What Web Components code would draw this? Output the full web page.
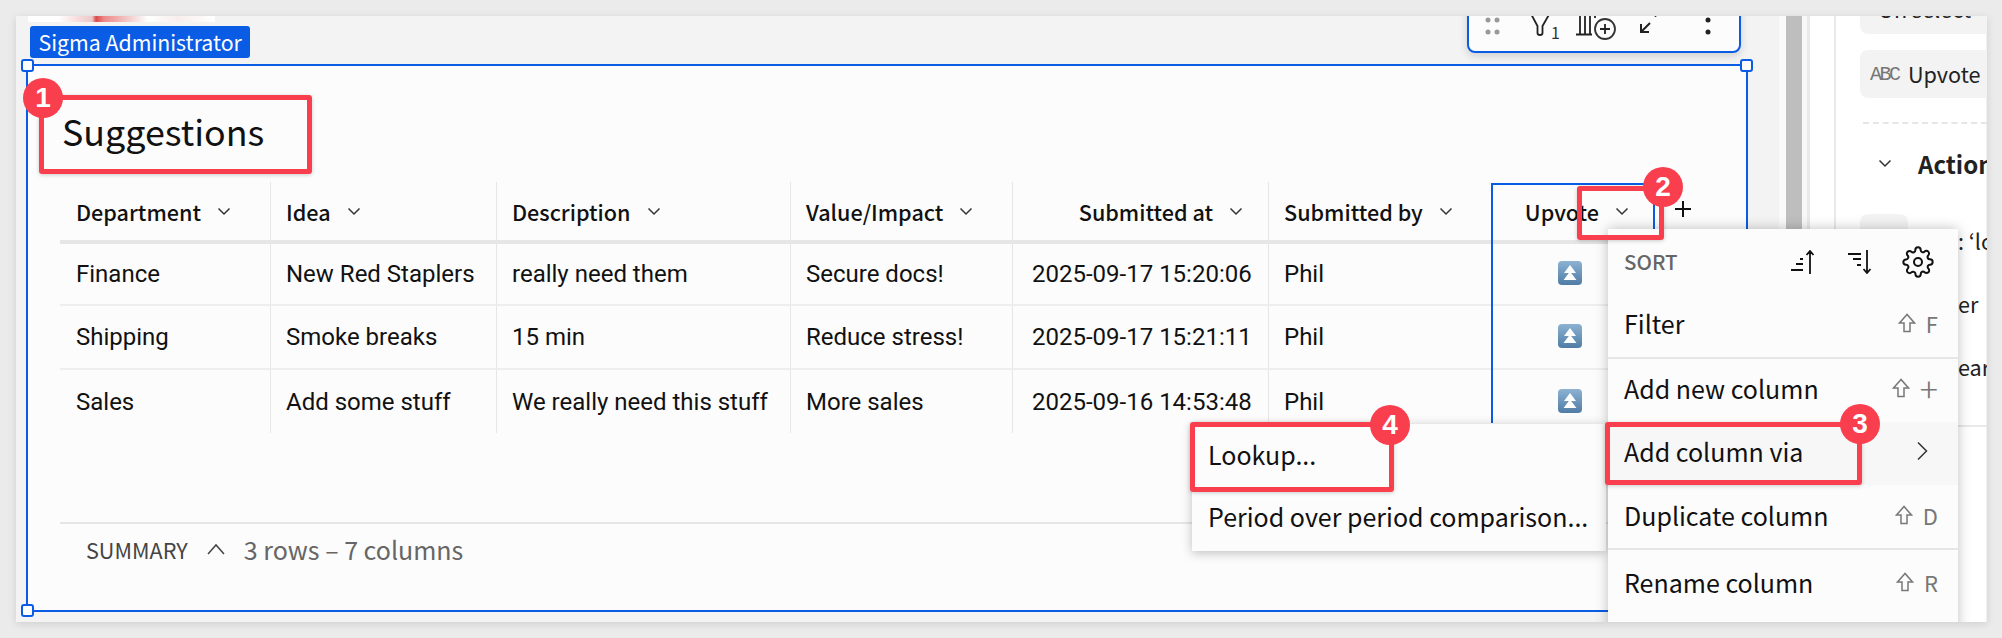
<!DOCTYPE html>
<html>
<head>
<meta charset="utf-8">
<style>
  html, body { margin: 0; padding: 0; background: #ebebeb; }
  body { width: 2002px; height: 638px; overflow: hidden; font-family: "Noto Sans CJK JP", "Noto Sans", sans-serif; color: #111; }
</style>
</head>
<body>
<app-shell>
  <work-canvas>
    <table-element title="Suggestions"></table-element>
  </work-canvas>
  <scroll-gutter></scroll-gutter>
  <side-panel></side-panel>

  <element-toolbar></element-toolbar>

  <sub-menu style="left:1176px;top:408px;width:414px;">
    <menu-item plain>Lookup...</menu-item>
    <menu-item plain>Period over period comparison...</menu-item>
  </sub-menu>

  <column-menu style="left:1592px;top:213px;width:350px;">
    <menu-item key="F" line>Filter</menu-item>
    <menu-item key="+">Add new column</menu-item>
    <menu-item arrow hover>Add column via</menu-item>
    <menu-item key="D" line style="padding-bottom:3px">Duplicate column</menu-item>
    <menu-item key="R" style="padding-bottom:0">Rename column</menu-item>
  </column-menu>

  <call-out n="1" corner="left" off="21,22" box="23,79,273,79"></call-out>
  <call-out n="2" corner="right" off="24,24" box="1561,170,87,54"></call-out>
  <call-out n="3" corner="right" off="23,23" box="1589,406,257,63"></call-out>
  <call-out n="4" corner="right" off="21,22" box="1174,406,204,70"></call-out>
</app-shell>

<script>
const CJK = `"Noto Sans CJK JP", "Noto Sans", sans-serif`;
const chevron = `<svg width="14" height="14" viewBox="0 0 14 14" fill="none" stroke="#333" stroke-width="1.5"><path d="M1.5 4.5 7 10l5.5-5.5"/></svg>`;
const shift = `<svg width="18" height="20" viewBox="0 0 18 20" fill="none" stroke="#777" stroke-width="1.5"><path d="M9 1.5 1.5 10H6v8.5h6V10h4.500z"/></svg>`;
const upvote = `<svg width="24" height="24" viewBox="0 0 24 24">
  <defs><linearGradient id="u" x1="0" y1="0" x2="0" y2="1"><stop offset="0" stop-color="#8db2d2"/><stop offset="1" stop-color="#4f7ca5"/></linearGradient></defs>
  <rect x="0" y="0" width="24" height="24" rx="4" fill="url(#u)"/>
  <path d="M12 4 18 12H6zM12 10.500 18.500 19h-13z" fill="#fff"/></svg>`;

// outer frame, everything else sits in here
class AppShell extends HTMLElement {
  constructor() {
    super();
    this.attachShadow({ mode: "open" }).innerHTML = `
    <style>
      :host { display: flex; position: relative; margin: 16px 0 0 16px; width: 1971px; height: 606px; overflow: hidden; background: #f3f3f3; box-shadow: 0 2px 8px rgba(0,0,0,.12); }
    </style>
    <slot></slot>`;
  }
}

class WorkCanvas extends HTMLElement {
  constructor() {
    super();
    this.attachShadow({ mode: "open" }).innerHTML = `
    <style>
      :host { display: flex; flex-direction: column; flex: 0 0 1763px; height: 606px; }
      .pic { margin-left: 12px; width: 187px; height: 6px; flex: none;
        background: linear-gradient(90deg, #fff 0, #fff 30px, #f6dcdc 50px, #eec9c9 64px, #d84a4a 68px, #e88 76px, #f6e4e4 110px, #fff 120px, #f8eded 150px, #fff 187px); }
      .who { margin: 4px 0 6px 14px; align-self: flex-start; height: 32px; line-height: 31px; padding: 0 8.5px; border-radius: 3px; background: #0a5ce4; color: #fff; font-size: 21.3px; }
    </style>
    <div class="pic"></div>
    <div class="who">Sigma Administrator</div>
    <slot></slot>`;
  }
}

class TableElement extends HTMLElement {
  constructor() {
    super();
    this.attachShadow({ mode: "open" }).innerHTML = `
    <style>
      :host { display: flex; flex-direction: column; position: relative; box-sizing: border-box; margin-left: 10px; width: 1722px; height: 548px; border: 2px solid #0a5ce4; background: #fcfcfc; }
      h1 { margin: 0; box-sizing: border-box; height: 116px; padding: 11px 0 0 34px; display: flex; align-items: center; font-weight: 400; font-size: 35.800px; color: #111; }
      .sp { flex: 1; }
      .sum { margin-left: 32px; height: 88px; box-sizing: border-box; padding: 0 0 36px 26px; border-top: 2px solid #e6e6e6; display: flex; align-items: center; color: #555; }
      .sum b { font-weight: 400; font-size: 21.6px; color: #444; }
      .sum svg { margin: 0 19px 0 19px; }
      .sum span { font-size: 25px; color: #666; }
      .h { position: absolute; width: 9px; height: 9px; border: 2px solid #0a5ce4; border-radius: 3px; background: #fff; }
    </style>
    <h1></h1>
    <data-table></data-table>
    <div class="sp"></div>
    <div class="sum"><b>SUMMARY</b><svg width="18" height="12" viewBox="0 0 18 12" fill="none" stroke="#444" stroke-width="1.5"><path d="M1 11 9 2l8 9"/></svg><span>3 rows – 7 columns</span></div>
    <i class="h" style="left:-7px;top:-7px"></i>
    <i class="h" style="right:-7px;top:-7px"></i>
    <i class="h" style="left:-7px;bottom:-7px"></i>`;
    this.shadowRoot.querySelector("h1").textContent = this.getAttribute("title");
  }
}

const COLS = [
  ["Department", 0], ["Idea", 0], ["Description", 0], ["Value/Impact", 0],
  ["Submitted at", 1], ["Submitted by", 0], ["Upvote", 2],
];
const ROWS = [
  ["Finance", "New Red Staplers", "really need them", "Secure docs!", "2025-09-17 15:20:06", "Phil"],
  ["Shipping", "Smoke breaks", "15 min", "Reduce stress!", "2025-09-17 15:21:11", "Phil"],
  ["Sales", "Add some stuff", "We really need this stuff", "More sales", "2025-09-16 14:53:48", "Phil"],
];

class DataTable extends HTMLElement {
  constructor() {
    super();
    let cells = "";
    COLS.forEach((c, i) => {
      const cls = c[1] == 1 ? "right" : c[1] == 2 ? "up" : "";
      cells += `<div class="c hd ${cls} ${i == 0 ? "first" : ""}"><span>${c[0]}</span>${chevron}</div>`;
    });
    cells += `<div class="plus hd"><svg width="16" height="16" viewBox="0 0 16 16" stroke="#111" stroke-width="2"><path d="M8 0v16M0 8h16"/></svg></div>`;
    ROWS.forEach((r, ri) => {
      r.forEach((t, i) => {
        cells += `<div class="c d ${i == 0 ? "first" : ""} ${i == 4 ? "date" : ""} ${ri == 2 ? "last" : ""}">${t}</div>`;
      });
      cells += `<div class="c d icon ${ri == 2 ? "last" : ""}">${upvote}</div><div class="c d nb ${ri == 2 ? "last" : ""}"></div>`;
    });
    this.attachShadow({ mode: "open" }).innerHTML = `
    <style>
      :host { display: block; position: relative; margin-left: 32px; width: 1640px; }
      .g { display: grid; grid-template-columns: 210px 226px 294px 222px 256px 224px 162px 46px; grid-template-rows: 62px 62px 64px 63px; }
      .c { box-sizing: border-box; display: flex; align-items: center; padding-left: 15px; border-left: 1px solid #e6e6e6; white-space: nowrap; }
      .first { border-left: 0; padding-left: 16px; }
      .date { padding-left: 19px; }
      .hd { border-bottom: 4px solid #e6e6e6; font-weight: 500; font-size: 21.6px; color: #111; }
      .hd svg { margin-left: 16px; }
      .right { justify-content: flex-end; padding-right: 25px; }
      .up { justify-content: flex-end; border-left: 0; padding-right: 25px; }
      .plus { display: flex; align-items: center; padding-left: 7px; }
      .plus svg { margin: 0 0 4px 14px; }
      .d { border-bottom: 2px solid #eee; font-family: Roboto, sans-serif; font-size: 24px; color: #111; }
      .last { border-bottom: 0; }
      .icon { justify-content: center; border-left: 0; padding: 0 6px 2px 0; }
      .nb { border-left: 0; padding: 0; }
      .sel { position: absolute; left: 1431px; top: 1px; width: 164px; height: 240px; box-sizing: border-box; border: 2px solid #0a5ce4; border-bottom: 0; pointer-events: none; }
    </style>
    <div class="g">${cells}</div>
    <div class="sel"></div>`;
  }
}

class ScrollGutter extends HTMLElement {
  constructor() {
    super();
    this.attachShadow({ mode: "open" }).innerHTML = `
    <style>
      :host { display: flex; flex: 0 0 57px; height: 606px; }
      i { display: block; }
    </style>
    <i style="width:7px;background:#fafafa"></i>
    <i style="width:16px;background:#bebebe"></i>
    <i style="width:5px;background:#f8f8f8"></i>
    <i style="width:3px;background:#e9e9e9"></i>
    <i style="width:24px;background:#fff"></i>
    <i style="width:2px;background:#e9e9e9"></i>`;
  }
}

class SidePanel extends HTMLElement {
  constructor() {
    super();
    this.attachShadow({ mode: "open" }).innerHTML = `
    <style>
      :host { display: flex; flex-direction: column; flex: 0 0 151px; height: 606px; overflow: hidden; background: #fff; box-shadow: inset -2px 0 2px -2px #ccc; font-size: 21.6px; color: #222; white-space: nowrap; }
      .pill { flex: none; box-sizing: border-box; margin-left: 24px; width: 180px; height: 48px; border-radius: 8px 0 0 8px; background: #f3f3f3; display: flex; align-items: center; }
      .on { margin-top: -30px; padding: 0 0 4px 18px; }
      .up { margin-top: 16px; padding: 0 0 2px 10px; }
      .up small { flex: none; width: 38px; margin-top: 3px; font-family: "Liberation Mono", monospace; font-size: 20px; color: #777; letter-spacing: -2.5px; }
      .dash { margin: 24px 0 0 27px; border-top: 2px dashed #e6e6e6; }
      .act { display: flex; align-items: center; margin: 24px 0 0 42px; height: 30px; font-size: 24px; font-weight: 700; color: #222; }
      .act svg { flex: none; margin-right: 26px; }
      .box { flex: none; margin: 36px 0 0 24px; width: 48px; height: 48px; border-radius: 8px; background: #f3f3f3; }
      .t { padding-left: 122px; height: 30px; line-height: 30px; flex: none; }
      .ln { flex: none; margin-left: 122px; border-top: 2px solid #e9e9e9; }
    </style>
    <div class="pill on">On select</div>
    <div class="pill up"><small>ABC</small>Upvote</div>
    <div class="dash"></div>
    <div class="act">${chevron}Actions</div>
    <div class="box"></div>
    <div class="t" style="margin-top:-36px">: ‘lookup</div>
    <div class="t" style="margin-top:33px">er</div>
    <div class="t" style="margin-top:33px">ear</div>
    <div class="ln" style="margin-top:43px"></div>`;
  }
}

class ElementToolbar extends HTMLElement {
  constructor() {
    super();
    this.attachShadow({ mode: "open" }).innerHTML = `
    <style>
      :host { position: absolute; left: 1451px; top: -16px; width: 274px; height: 53px; box-sizing: border-box; border: 2px solid #0a5ce4; border-radius: 0 0 8px 8px; background: #fcfcfc; box-shadow: 0 3px 8px rgba(0,0,0,.15); }
      svg { display: block; }
      text { font-family: ${CJK}; font-size: 16px; fill: #333; }
    </style>
    <svg width="270" height="49" viewBox="1469 2 270 49" fill="none" stroke="#222" stroke-width="1.8">
      <g fill="#999" stroke="none"><circle cx="1488" cy="20" r="2.500"/><circle cx="1497" cy="20" r="2.500"/><circle cx="1488" cy="32" r="2.500"/><circle cx="1497" cy="32" r="2.500"/></g>
      <path d="M1530 12 1537.500 26v7q0 2 2.500 2t2.500-2v-7L1550.500 12"/>
      <text x="1551" y="39" stroke="none">1</text>
      <path d="M1576 34.500h16M1580 34V14M1585 34V14M1590 34V14M1595 16v2"/>
      <circle cx="1605" cy="29" r="10" stroke="#333" fill="#fcfcfc"/>
      <path d="M1600 29h10M1605 24v10"/>
      <path d="M1650 23 1641.500 31.500M1641 24v8h8" stroke-width="2"/>
      <circle cx="1655.500" cy="16" r="1" fill="#222" stroke="none"/>
      <g fill="#222" stroke="none"><circle cx="1708" cy="20" r="2.500"/><circle cx="1708" cy="32" r="2.500"/></g>
    </svg>`;
  }
}

class ColumnMenu extends HTMLElement {
  constructor() {
    super();
    this.attachShadow({ mode: "open" }).innerHTML = `
    <style>
      :host { position: absolute; display: block; background: #fcfcfc; box-shadow: 0 0 12px rgba(0,0,0,.25); height: 420px; }
      .top { box-sizing: border-box; height: 65px; display: flex; align-items: center; padding-left: 16px; }
      .top b { flex: 1; padding-bottom: 2px; font-size: 20.5px; font-weight: 500; color: #666; }
      .top svg { display: block; }
    </style>
    <div class="top">
      <b>SORT</b>
      <svg width="24" height="24" viewBox="0 0 24 24" fill="none" stroke="#111" stroke-width="1.800" style="margin-right:33px">
        <path d="M19 1v23M15.500 5 19 1l3.500 4M9 9h3M5 14h7M0 20h12"/>
      </svg>
      <svg width="24" height="24" viewBox="0 0 24 24" fill="none" stroke="#111" stroke-width="1.800" style="margin-right:30px">
        <path d="M19 0v23M15.500 19 19 23l3.500-4M0 4h13M5 9h8M9 15h4"/>
      </svg>
      <svg width="32" height="32" viewBox="0 0 24 24" fill="none" stroke="#111" stroke-width="1.500" style="margin-right:24px">
        <path d="M12 15a3 3 0 1 0 0-6 3 3 0 0 0 0 6z"/>
        <path d="M19.400 15a1.650 1.650 0 0 0 .33 1.820l.06.06a2 2 0 0 1 0 2.830 2 2 0 0 1-2.830 0l-.06-.06a1.650 1.650 0 0 0-1.820-.33 1.650 1.650 0 0 0-1 1.510V21a2 2 0 0 1-2 2 2 2 0 0 1-2-2v-.09A1.650 1.650 0 0 0 9 19.400a1.650 1.650 0 0 0-1.820.33l-.06.06a2 2 0 0 1-2.830 0 2 2 0 0 1 0-2.830l.06-.06a1.650 1.650 0 0 0 .33-1.820 1.650 1.650 0 0 0-1.510-1H3a2 2 0 0 1-2-2 2 2 0 0 1 2-2h.09A1.650 1.650 0 0 0 4.600 9a1.650 1.650 0 0 0-.33-1.820l-.06-.06a2 2 0 0 1 0-2.830 2 2 0 0 1 2.830 0l.06.06a1.650 1.650 0 0 0 1.820.33H9a1.650 1.650 0 0 0 1-1.510V3a2 2 0 0 1 2-2 2 2 0 0 1 2 2v.09a1.650 1.650 0 0 0 1 1.510 1.650 1.650 0 0 0 1.820-.33l.06-.06a2 2 0 0 1 2.830 0 2 2 0 0 1 0 2.830l-.06.06a1.650 1.650 0 0 0-.33 1.820V9a1.650 1.650 0 0 0 1.510 1H21a2 2 0 0 1 2 2 2 2 0 0 1-2 2h-.09a1.650 1.650 0 0 0-1.510 1z"/>
      </svg>
    </div>
    <slot></slot>`;
  }
}

class SubMenu extends HTMLElement {
  constructor() {
    super();
    this.attachShadow({ mode: "open" }).innerHTML = `
    <style>
      :host { position: absolute; display: block; padding: 3px 0 0; background: #fcfcfc; box-shadow: 0 2px 10px rgba(0,0,0,.25); }
    </style>
    <slot></slot>`;
  }
}

class MenuItem extends HTMLElement {
  constructor() {
    super();
    const key = this.getAttribute("key");
    let right = "";
    if (key) right = `<span class="k">${shift}<em class="${key == "+" ? "big" : ""}">${key}</em></span>`;
    if (this.hasAttribute("arrow")) right = `<svg class="ar" width="11" height="20" viewBox="0 0 11 20" fill="none" stroke="#333" stroke-width="1.500"><path d="M1 1.500 9.500 10 1 18.500"/></svg>`;
    this.attachShadow({ mode: "open" }).innerHTML = `
    <style>
      :host { display: flex; box-sizing: border-box; height: 63px; align-items: center; padding: 0 20px 5px 16px; font-size: 25px; color: #111; white-space: nowrap; }
      :host([line]) { height: 65px; border-bottom: 2px solid #e6e6e6; }
      :host([hover]) { background: #f7f7f7; }
      :host([plain]) { height: 62px; padding-bottom: 8px; padding-left: 16px; }
      .l { flex: 1; }
      .k { display: flex; align-items: center; color: #777; font-size: 22px; line-height: 24px; }
      em { font-style: normal; margin-left: 10px; min-width: 12px; text-align: right; }
      em.big { font-size: 34px; font-weight: 300; }
      svg { display: block; }
      .ar { margin-right: 10px; }
    </style>
    <span class="l"><slot></slot></span>${right}`;
  }
}

// red annotation box with a numbered badge on one corner
class CallOut extends HTMLElement {
  constructor() {
    super();
    const b = this.getAttribute("box").split(",");
    const off = this.getAttribute("off").split(",");
    const left = this.getAttribute("corner") == "left";
    this.attachShadow({ mode: "open" }).innerHTML = `
    <style>
      :host { position: absolute; display: block; box-sizing: border-box; left: ${b[0]}px; top: ${b[1]}px; width: ${b[2]}px; height: ${b[3]}px; border: 5px solid #f93e4e; border-radius: 3px; box-shadow: 0 1px 4px rgba(0,0,0,.2); }
      .n { position: absolute; ${left ? "left" : "right"}: -${off[0]}px; top: -${off[1]}px; width: 40px; height: 40px; border-radius: 50%; background: #f93e4e; color: #fff; font-family: "Liberation Sans", sans-serif; font-weight: 700; font-size: 28px; line-height: 40px; text-align: center; }
    </style>
    <div class="n">${this.getAttribute("n")}</div>`;
  }
}

customElements.define("menu-item", MenuItem);
customElements.define("data-table", DataTable);
customElements.define("table-element", TableElement);
customElements.define("work-canvas", WorkCanvas);
customElements.define("scroll-gutter", ScrollGutter);
customElements.define("side-panel", SidePanel);
customElements.define("element-toolbar", ElementToolbar);
customElements.define("column-menu", ColumnMenu);
customElements.define("sub-menu", SubMenu);
customElements.define("call-out", CallOut);
customElements.define("app-shell", AppShell);
</script>
</body>
</html>
